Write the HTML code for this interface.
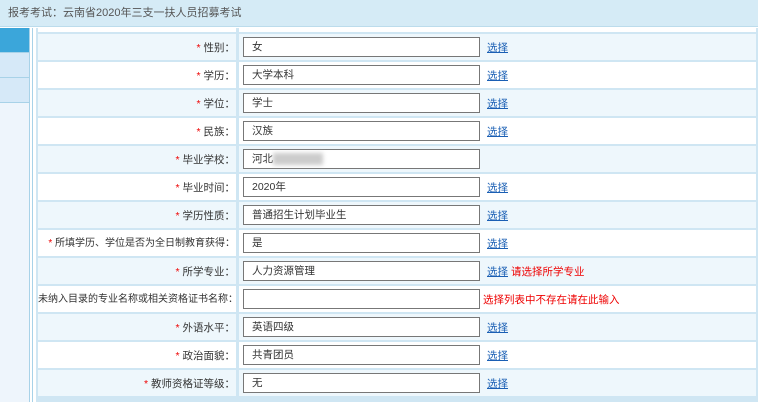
<!DOCTYPE html><html><head><meta charset="utf-8"><style>
body{margin:0;width:758px;height:402px;overflow:hidden;background:#fff;font-family:"Liberation Sans","Noto Sans CJK SC",sans-serif;font-size:11px;color:#333;position:relative}
.hd{position:absolute;left:0;top:0;width:758px;height:27px;background:#d5ebf6;border-bottom:1px solid #bcdcec;line-height:26px;color:#555;padding-left:8px;box-sizing:border-box;font-size:11px}
.sb{position:absolute;left:0;top:28px;width:29px;height:374px;background:#eef5fc;border-right:1px solid #a8d2e8}
.sb div{height:24px;border-bottom:1px solid #a8d2e8;background:#d6e9f8}
.sb div.a{background:#3ba6da}
.ln{position:absolute;left:32px;top:28px;width:1px;height:374px;background:#a8d2e8}
.tb{position:absolute;left:36px;top:28px;width:722px;height:374px;background:#cfe6f3;overflow:hidden}
.r{position:absolute;left:2px;height:26px;width:718px}
.l,.v{position:absolute;top:0;height:26px;line-height:28px}
.l{left:0;width:198px;text-align:right;padding-right:1px;box-sizing:border-box;white-space:nowrap;overflow:hidden;font-size:10.5px}
.l.sm{font-size:10px}
.v{left:201px;width:517px}
.r.o .l,.r.o .v{background:#eef7fc}
.r.e .l,.r.e .v{background:#fff}
.s{color:#e00}
.in{position:absolute;left:4px;top:3px;width:237px;height:20px;border:1px solid #777;box-sizing:border-box;background:#fff;line-height:19px;padding-left:8px;color:#333;font-size:10.5px}
.k{position:absolute;left:248px;top:0;color:#1a5fb4;text-decoration:underline;font-size:10.5px}
.m{color:#e00;font-size:10.5px}
</style></head><body>
<div class="hd">报考考试：云南省2020年三支一扶人员招募考试</div>
<div class="sb"><div class="a"></div><div></div><div></div></div>
<div class="ln"></div>
<div class="tb">
<div class="r e" style="top:0;height:4px"><div class="l" style="height:4px"></div><div class="v" style="height:4px"></div></div>
<div class="r o" style="top:6px"><div class="l"><span class="s">*</span> 性别：</div><div class="v"><div class="in">女</div><span class="k">选择</span></div></div>
<div class="r e" style="top:34px"><div class="l"><span class="s">*</span> 学历：</div><div class="v"><div class="in">大学本科</div><span class="k">选择</span></div></div>
<div class="r o" style="top:62px"><div class="l"><span class="s">*</span> 学位：</div><div class="v"><div class="in">学士</div><span class="k">选择</span></div></div>
<div class="r e" style="top:90px"><div class="l"><span class="s">*</span> 民族：</div><div class="v"><div class="in">汉族</div><span class="k">选择</span></div></div>
<div class="r o" style="top:118px"><div class="l"><span class="s">*</span> 毕业学校：</div><div class="v"><div class="in">河北<span style="display:inline-block;width:50px;height:12px;background:#ccc;vertical-align:middle;filter:blur(2px)"></span></div></div></div>
<div class="r e" style="top:146px"><div class="l"><span class="s">*</span> 毕业时间：</div><div class="v"><div class="in">2020年</div><span class="k">选择</span></div></div>
<div class="r o" style="top:174px"><div class="l"><span class="s">*</span> 学历性质：</div><div class="v"><div class="in">普通招生计划毕业生</div><span class="k">选择</span></div></div>
<div class="r e" style="top:202px"><div class="l sm"><span class="s">*</span> 所填学历、学位是否为全日制教育获得：</div><div class="v"><div class="in">是</div><span class="k">选择</span></div></div>
<div class="r o" style="top:230px"><div class="l"><span class="s">*</span> 所学专业：</div><div class="v"><div class="in">人力资源管理</div><span class="k">选择</span> <span class="m" style="position:absolute;left:272px">请选择所学专业</span></div></div>
<div class="r e" style="top:258px"><div class="l sm">未纳入目录的专业名称或相关资格证书名称：</div><div class="v"><div class="in"></div><span class="m" style="position:absolute;left:244px">选择列表中不存在请在此输入</span></div></div>
<div class="r o" style="top:286px"><div class="l"><span class="s">*</span> 外语水平：</div><div class="v"><div class="in">英语四级</div><span class="k">选择</span></div></div>
<div class="r e" style="top:314px"><div class="l"><span class="s">*</span> 政治面貌：</div><div class="v"><div class="in">共青团员</div><span class="k">选择</span></div></div>
<div class="r o" style="top:342px"><div class="l"><span class="s">*</span> 教师资格证等级：</div><div class="v"><div class="in">无</div><span class="k">选择</span></div></div>
</div>
</body></html>
